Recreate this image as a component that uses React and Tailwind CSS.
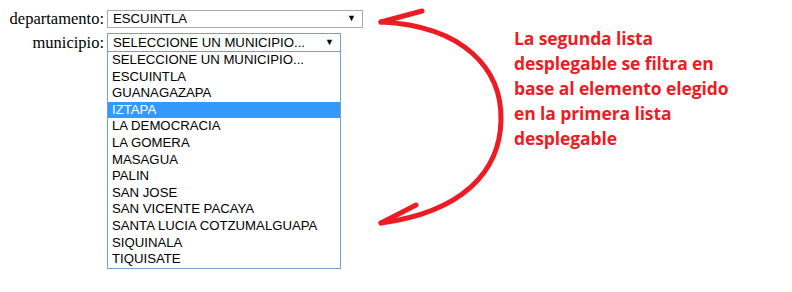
import React from "react";

const items = [
  "SELECCIONE UN MUNICIPIO...",
  "ESCUINTLA",
  "GUANAGAZAPA",
  "IZTAPA",
  "LA DEMOCRACIA",
  "LA GOMERA",
  "MASAGUA",
  "PALIN",
  "SAN JOSE",
  "SAN VICENTE PACAYA",
  "SANTA LUCIA COTZUMALGUAPA",
  "SIQUINALA",
  "TIQUISATE",
];

export default function App() {
  return (
    <div className="relative w-[792px] h-[292px] bg-white overflow-hidden">
      <div className="flex">
        <div className="pt-[10px] pl-[8px] flex flex-col gap-[5px]">
          <div className="flex items-center">
            <span className="w-[96px] text-right text-[16.5px] leading-[18px] text-black font-['Liberation_Serif',serif]">departamento:</span>
            <div className="ml-[3px] w-[256px] h-[18px] border border-[#a9a9a9] flex items-center justify-between pl-[5px] pr-[6px] font-['Liberation_Sans',Arial,sans-serif] text-[13.2px] text-black">
              <span>ESCUINTLA</span>
              <span className="text-[9px]">▼</span>
            </div>
          </div>
          <div className="flex items-center">
            <span className="w-[96px] text-right text-[16.5px] leading-[18px] text-black font-['Liberation_Serif',serif]">municipio:</span>
            <div className="relative ml-[3px]">
              <div className="w-[234px] h-[19px] border border-[#7a9bd6] flex items-center justify-between pl-[5px] pr-[6px] font-['Liberation_Sans',Arial,sans-serif] text-[13.2px] text-black">
                <span>SELECCIONE UN MUNICIPIO...</span>
                <span className="text-[9px]">▼</span>
              </div>
              <div className="absolute left-0 top-[18px] w-[234px] border border-[#7a9bd6] bg-white font-['Liberation_Sans',Arial,sans-serif] text-[13.2px] text-black">
                {items.map((it) => (
                  <div
                    key={it}
                    className={
                      it === "IZTAPA"
                        ? "h-[16.6px] leading-[16.6px] pl-[4px] bg-[#3399ff] text-white"
                        : "h-[16.6px] leading-[16.6px] pl-[4px]"
                    }
                  >
                    {it}
                  </div>
                ))}
              </div>
            </div>
          </div>
        </div>
        <div className="ml-[151px] pt-[26px] w-[270px] font-['Open_Sans',sans-serif] font-bold text-[17.5px] leading-[25px] tracking-[-0.1px] text-[#ed1c24]">
          La segunda lista<br />
          desplegable se filtra en<br />
          base al elemento elegido<br />
          en la primera lista<br />
          desplegable
        </div>
      </div>
      <svg className="absolute left-0 top-0" width="792" height="292" viewBox="0 0 792 292">
        <g fill="none" stroke="#ed1c24" strokeWidth="5" strokeLinecap="round" strokeLinejoin="round">
          <path d="M381,22 C465,26 502,70 501,120 C500,172 462,212 381,223" />
          <path d="M381,22 L422,11" />
          <path d="M381,223 L416,205" />
        </g>
      </svg>
    </div>
  );
}
